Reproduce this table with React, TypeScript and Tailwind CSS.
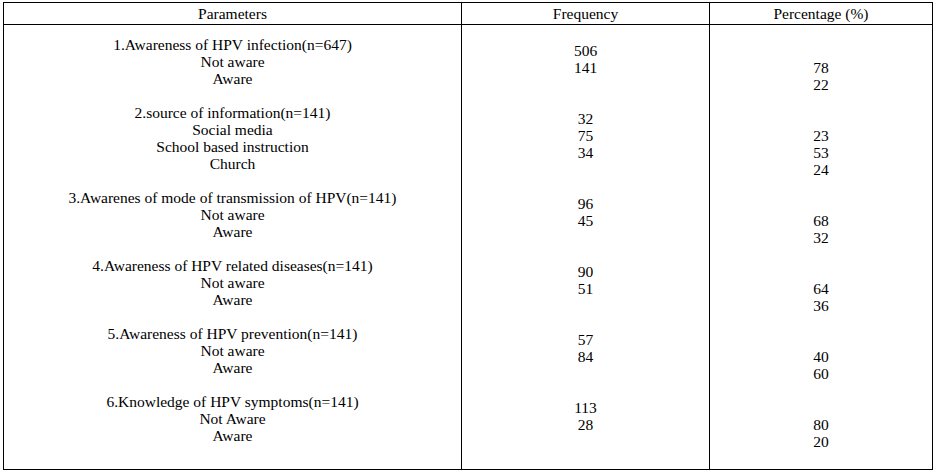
import React from "react";

const params: string[] = [
  "1.Awareness of HPV infection(n=647)",
  "Not aware",
  "Aware",
  "",
  "2.source of information(n=141)",
  "Social media",
  "School based instruction",
  "Church",
  "",
  "3.Awarenes of mode of transmission of HPV(n=141)",
  "Not aware",
  "Aware",
  "",
  "4.Awareness of HPV related diseases(n=141)",
  "Not aware",
  "Aware",
  "",
  "5.Awareness of HPV prevention(n=141)",
  "Not aware",
  "Aware",
  "",
  "6.Knowledge of HPV symptoms(n=141)",
  "Not Aware",
  "Aware",
];

const frequency: string[] = [
  "506", "141", "", "",
  "32", "75", "34", "", "",
  "96", "45", "", "",
  "90", "51", "", "",
  "57", "84", "", "",
  "113", "28",
];

const percentage: string[] = [
  "", "78", "22", "", "",
  "23", "53", "24", "", "",
  "68", "32", "", "",
  "64", "36", "", "",
  "40", "60", "", "",
  "80", "20",
];

function Lines({ items }: { items: string[] }) {
  return (
    <>
      {items.map((t, i) => (
        <div key={i} className="h-[17px] leading-[17px] whitespace-nowrap">
          {t === "" ? "\u00a0" : t}
        </div>
      ))}
    </>
  );
}

export default function App() {
  return (
    <div className="bg-white w-[936px] h-[473px] pt-[2px] pl-[3px] text-black [font-family:Liberation_Serif,Times_New_Roman,serif] text-[15.5px]">
      <div className="w-[930px] h-[468px] border border-black flex flex-col">
        {/* HEADER */}
        <div className="grid grid-cols-[458px_248px_222px] h-[22px] border-b border-black leading-[21px] text-center">
          <div className="border-r border-black">Parameters</div>
          <div className="border-r border-black">Frequency</div>
          <div>Percentage (%)</div>
        </div>

        {/* BODY */}
        <div className="grid grid-cols-[458px_248px_222px] flex-1 text-center">
          <div className="border-r border-black pt-[11px]">
            <Lines items={params} />
          </div>
          <div className="border-r border-black pt-[17px]">
            <Lines items={frequency} />
          </div>
          <div className="pt-[17px]">
            <Lines items={percentage} />
          </div>
        </div>
      </div>
    </div>
  );
}
